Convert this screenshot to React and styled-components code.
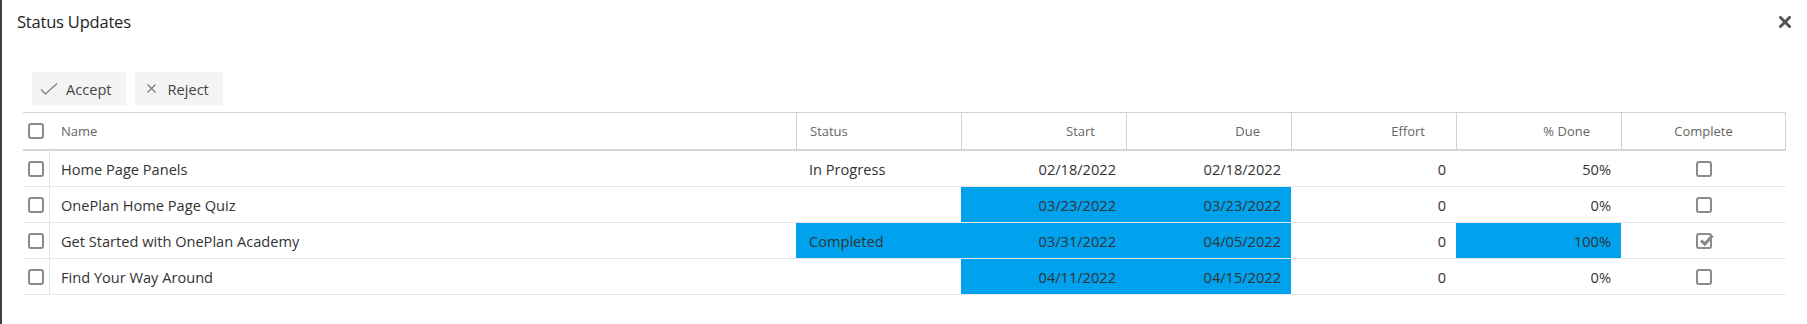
import React from "react";
import styled, { createGlobalStyle, css } from "styled-components";

const GlobalStyle = createGlobalStyle`
  html, body { margin: 0; padding: 0; background: #fff; }
  body { font-family: "Open Sans", "Noto Sans", "Liberation Sans", sans-serif; color: #333; }
`;

const Dialog = styled.div`
  box-sizing: border-box;
  height: 324px;
  width: 1807px;
  border-left: 2px solid #3f3f3f;
  background: #fff;
`;

const TitleBar = styled.div`
  display: flex;
  justify-content: space-between;
  align-items: flex-start;
  padding: 10px 16px 0 15px;
  height: 62px;
  box-sizing: border-box;
`;

const Title = styled.h1`
  margin: 0;
  font-size: 16.5px;
  font-weight: 400;
  color: #222;
  line-height: 24px;
  letter-spacing: -0.2px;
`;

const CloseButton = styled.button`
  border: 0;
  background: none;
  padding: 0;
  margin-top: 6px;
  width: 12px;
  height: 12px;
  display: flex;
  cursor: pointer;
`;

const Toolbar = styled.div`
  display: flex;
  gap: 9px;
  padding-left: 30px;
  margin-top: 10px;
  height: 33px;
`;

const ToolButton = styled.button`
  display: flex;
  align-items: center;
  gap: ${(p) => p.$gap}px;
  height: 33px;
  padding: 0 14px 0 ${(p) => p.$padLeft}px;
  background: #f4f4f4;
  border: 0;
  font-family: inherit;
  font-size: 14.6px;
  color: #444;
  cursor: pointer;
`;

const Table = styled.div`
  margin: 7px 0 0 21px;
  width: 1763px;
  border-top: 1px solid #d2d2d2;
`;

const Row = styled.div`
  display: grid;
  grid-template-columns: 26px 747px repeat(6, 165px);
  height: ${(p) => (p.$header ? 36 : 35)}px;
  border-bottom: ${(p) => (p.$header ? "2px solid #d6d6d6" : "1px solid #e6e6e6")};
`;

const Cell = styled.div`
  box-sizing: border-box;
  display: flex;
  align-items: center;
  min-width: 0;
  font-size: 14.6px;
  color: #333;
  padding: 0 ${(p) => p.$padRight ?? 10}px 0 ${(p) => p.$padLeft ?? 12}px;
  justify-content: ${(p) =>
    p.$align === "right" ? "flex-end" : p.$align === "center" ? "center" : "flex-start"};
  ${(p) => p.$hl && css`background: #00a2ed;`}
  ${(p) => p.$divider && css`border-left: 1px solid #e6e6e6;`}
  ${(p) => p.$first && css`padding: 0 0 0 5px;`}
`;

const HeadCell = styled(Cell)`
  font-size: 13px;
  color: #666;
  ${(p) => p.$sep && css`border-left: 1px solid #d2d2d2;`}
  ${(p) => p.$last && css`border-right: 1px solid #d2d2d2;`}
`;

const Box = styled.span`
  box-sizing: border-box;
  display: inline-block;
  position: relative;
  width: 16px;
  height: 16px;
  border: 2px solid #8c8c8c;
  border-radius: 3px;
  background: #fff;
`;

const CheckMark = styled.svg`
  position: absolute;
  left: 1px;
  top: -3px;
`;

function Checkbox({ checked }) {
  return (
    <Box>
      {checked && (
        <CheckMark width="15" height="15" viewBox="0 0 15 15">
          <path d="M2 8.5 L5.8 12 L13.5 3.5" fill="none" stroke="#888" strokeWidth="3" strokeLinejoin="miter" />
        </CheckMark>
      )}
    </Box>
  );
}

const rows = [
  { name: "Home Page Panels", status: "In Progress", start: "02/18/2022", due: "02/18/2022", effort: "0", done: "50%", complete: false, hl: [] },
  { name: "OnePlan Home Page Quiz", status: "", start: "03/23/2022", due: "03/23/2022", effort: "0", done: "0%", complete: false, hl: ["start", "due"] },
  { name: "Get Started with OnePlan Academy", status: "Completed", start: "03/31/2022", due: "04/05/2022", effort: "0", done: "100%", complete: true, hl: ["status", "start", "due", "done"] },
  { name: "Find Your Way Around", status: "", start: "04/11/2022", due: "04/15/2022", effort: "0", done: "0%", complete: false, hl: ["start", "due"] },
];

export default function App() {
  return (
    <>
      <GlobalStyle />
      <Dialog>
        <TitleBar>
          <Title>Status Updates</Title>
          <CloseButton aria-label="Close">
            <svg width="12" height="12" viewBox="0 0 12 12">
              <path d="M1.5 1.5 L10.5 10.5 M10.5 1.5 L1.5 10.5" stroke="#555" strokeWidth="3" strokeLinecap="round" />
            </svg>
          </CloseButton>
        </TitleBar>
        <Toolbar>
          <ToolButton $padLeft={8} $gap={8}>
            <svg width="18" height="12" viewBox="0 0 18 12">
              <path d="M1 6.5 L5.5 11 L17 0.5" fill="none" stroke="#777" strokeWidth="1.1" />
            </svg>
            Accept
          </ToolButton>
          <ToolButton $padLeft={12} $gap={12}>
            <svg width="9" height="9" viewBox="0 0 9 9">
              <path d="M0.5 0.5 L8.5 8.5 M8.5 0.5 L0.5 8.5" stroke="#777" strokeWidth="1.1" />
            </svg>
            Reject
          </ToolButton>
        </Toolbar>
        <Table>
          <Row $header>
            <HeadCell $first><Checkbox /></HeadCell>
            <HeadCell>Name</HeadCell>
            <HeadCell $sep $padLeft={13}>Status</HeadCell>
            <HeadCell $sep $align="right" $padRight={31}>Start</HeadCell>
            <HeadCell $sep $align="right" $padRight={31}>Due</HeadCell>
            <HeadCell $sep $align="right" $padRight={31}>Effort</HeadCell>
            <HeadCell $sep $align="right" $padRight={31}>% Done</HeadCell>
            <HeadCell $sep $last $align="center" $padLeft={0} $padRight={0}>Complete</HeadCell>
          </Row>
          {rows.map((r) => (
            <Row key={r.name}>
              <Cell $first><Checkbox /></Cell>
              <Cell $divider $padLeft={11}>{r.name}</Cell>
              <Cell $padLeft={13} $hl={r.hl.includes("status")}>{r.status}</Cell>
              <Cell $align="right" $hl={r.hl.includes("start")}>{r.start}</Cell>
              <Cell $align="right" $hl={r.hl.includes("due")}>{r.due}</Cell>
              <Cell $align="right">{r.effort}</Cell>
              <Cell $align="right" $hl={r.hl.includes("done")}>{r.done}</Cell>
              <Cell $align="center" $padLeft={0} $padRight={0}><Checkbox checked={r.complete} /></Cell>
            </Row>
          ))}
        </Table>
      </Dialog>
    </>
  );
}
